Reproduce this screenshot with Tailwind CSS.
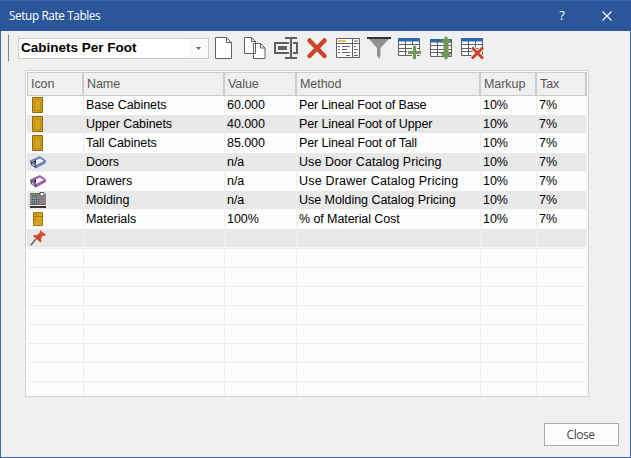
<!DOCTYPE html>
<html lang="en">
<head>
<meta charset="utf-8">
<title>Setup Rate Tables</title>
<script src="https://cdn.jsdelivr.net/npm/@tailwindcss/browser@4"></script>
</head>
<body class="w-[631px] h-[458px] overflow-hidden">
<svg class="hidden">
  <defs>
    <symbol id="door" viewBox="0 0 16 16"><path d="M2.500 .5h10v15h-10z" fill="#cf9d18" stroke="#9c6410"/><path d="M4.500 13.500V5Q4.500 2.500 7.500 2.500T10.500 5v8.500z" fill="#d2a31c" stroke="#b68212" stroke-width=".7"/></symbol>
    <symbol id="tray" viewBox="0 0 16 16"><path d="M0 6.500L10 2l6 4.500V9L6 14.500 1 11z" fill="currentColor"/><path d="M3.500 7.500L10 4.500l3.500 2.500L6.500 10.800z" fill="#fff"/><path d="M3.500 7.500L6 6.300v3.700z" fill="#15151f"/><path d="M.3 7l5.500 4.500V14L1.300 11z" fill="#3b3b58"/><path d="M1.800 9.300l2.700 2v1.200l-2.500-1.800z" fill="#f0f0f8"/></symbol>
    <symbol id="machine" viewBox="0 0 16 16"><path d="M0 2h16v10H0z" fill="#85878a"/><path d="M0 1.500h10M0 12.500h16" stroke="#666"/><path d="M2 3h5v2H2z" fill="#5a8746"/><path d="M10 .5h4v3.500h-4z" fill="#fff" stroke="#555"/><path d="M2 7.500h7M2 9.500h7M2 11.500h5" stroke="#234a83" stroke-dasharray="1 1"/><path d="M11 7.500h4M9 9.500h6M9 11.500h2" stroke="#c9543c" stroke-dasharray="1 1"/><path d="M0 14h16v2H0z" fill="#353535"/></symbol>
    <symbol id="cabinet" viewBox="0 0 16 16"><path d="M3.500 1.500h9v13h-9z" fill="#d7a61a" stroke="#a4721a"/><path d="M3 5.500h10M5 3.500h3M5.500 7v3" stroke="#9a6915" stroke-width=".8"/></symbol>
    <symbol id="pin" viewBox="0 0 16 16"><path d="M6 9L.7 15.300" stroke="#666" stroke-width="1.500"/><path d="M10 0l6 5-1 1-2-.5-2 3 .5 3-1 1L3 6l1-1 3 .3 3-3z" fill="#d24a2e"/></symbol>
    <symbol id="grid" viewBox="0 0 24 24"><path d="M1.500 4h21v15.500h-21z" fill="#fff" stroke="#606060"/><path d="M2 8.500h20M2 12.500h20M2 15.500h20M8.500 5v14M15.500 5v14" stroke="#606060" fill="none"/><path d="M1 2h22v3.500H1z" fill="#2f67ac"/></symbol>
  </defs>
</svg>
<div class="w-[631px] h-[458px] flex flex-col bg-[#f0f0f0] border border-t-0 border-[#3c66a8]">
  <header class="h-[31px] shrink-0 -mx-px px-[9px] flex items-center bg-[#2b579a] border-t border-[#3c66a8] text-white font-['Open_Sans',sans-serif]">
    <h1 class="text-[11.8px] tracking-[-0.4px] grow">Setup Rate Tables</h1>
    <span class="w-[12px] mr-[34px] text-[13px] text-center">?</span>
    <svg class="w-[10px] h-[10px] mr-[10px]" viewBox="0 0 10 10"><path d="M.5.5l9 9M9.500.5l-9 9" stroke="#fff" stroke-width="1.100"/></svg>
  </header>
  <div class="h-[39px] shrink-0 pt-[4px] pl-[7px] flex items-start">
    <div class="w-px h-[26px] bg-[#858585] mr-[9px]"></div>
    <div class="mt-[3px] w-[191px] h-[21px] bg-white border border-[#ccc] flex items-center font-['Liberation_Sans',sans-serif]">
      <span class="pl-[2px] grow text-[13.5px] font-bold whitespace-nowrap">Cabinets Per Foot</span>
      <span class="w-[19px] h-full bg-[#fafafa] flex items-center justify-center"><svg class="w-[5px] h-[3px]" viewBox="0 0 5 3"><path d="M0 0h5L2.500 3z" fill="#666"/></svg></span>
    </div>
    <svg class="ml-[5px] w-[20px] h-[24px] mt-[1px]" viewBox="0 0 20 24" fill="#fff" stroke="#606060"><path d="M1.500 1.500h11l5 5v16h-16zM12.500 1.500v5h5"/></svg>
    <svg class="ml-[9px] w-[24px] h-[24px] mt-[1px]" viewBox="0 0 24 24" fill="#fff" stroke="#606060"><path d="M1.500 1.500h7l4 4v12h-11zM8.500 1.500v4h4M10.500 7.500h7l4.500 4.500v10.500H10.500zM17.500 7.500v4.500h4.500"/></svg>
    <svg class="ml-[6px] w-[26px] h-[24px] mt-[1px]" viewBox="0 0 26 24" fill="none" stroke="#606060" stroke-width="2"><path d="M16 7H2v10h14M20 7h4v10h-4M12 2h12M12 22h12M18 2v20"/><path d="M5 10h9v4H5z" fill="#606060" stroke="none"/></svg>
    <svg class="ml-[7px] w-[22px] h-[24px] mt-[1px]" viewBox="0 0 22 24"><path d="M3.500 4.500l15 15.500M18.500 4.500l-15 15.500" stroke="#cb4528" stroke-width="4.500" stroke-linecap="round"/></svg>
    <svg class="ml-[7px] w-[26px] h-[24px] mt-[1px]" viewBox="0 0 26 24"><path d="M1.500 2.500h23v19h-23z" fill="#fff" stroke="#606060"/><path d="M3 4h8v2H3z" fill="#f3bc58"/><path d="M17.500 3v18M2 7.500h22M3 10.500h2M7 10.500h8M3 13.500h2M7 13.500h5M3 16.500h2M7 16.500h8M19 5h4M19 10.500h2M19 13.500h4M19 16.500h2M11 19.500h4M19 19.500h4" stroke="#606060"/></svg>
    <svg class="ml-[6px] w-[24px] h-[24px] mt-[1px]" viewBox="0 0 24 24"><path d="M2 3h20l-8.500 9v7L12 23l-2-4v-7z" fill="#8f9094"/><path d="M0 1h24v2H0z" fill="#303038"/></svg>
    <svg class="ml-[6px] w-[24px] h-[24px] mt-[1px]" viewBox="0 0 24 24"><use href="#grid"/><path d="M17.500 9v15M10 16.500h14" stroke="#f0f0f0" stroke-width="5"/><path d="M17.500 10v13M11 16.500h13" stroke="#72985a" stroke-width="3"/></svg>
    <svg class="ml-[8px] w-[24px] h-[24px] mt-[1px]" viewBox="0 0 24 24"><use href="#grid" y="1"/><path d="M17 .5l5 6h-3v11h3l-5 6-5-6h3v-11h-3z" fill="#72985a" stroke="#72985a"/></svg>
    <svg class="ml-[7px] w-[24px] h-[24px] mt-[1px]" viewBox="0 0 24 24"><use href="#grid"/><path d="M12 11.500l11 11M23 11.500l-11 11" stroke="#f0f0f0" stroke-width="5"/><path d="M12 11.500l11 11M23 11.500l-11 11" stroke="#cb4528" stroke-width="3"/></svg>
  </div>
  <main class="ml-[24px] w-[564px] h-[327px] shrink-0 border border-[#d2d2d2] bg-[#fdfdfd] p-px font-['Liberation_Sans',sans-serif] text-[12.5px] tracking-[-0.06px] text-black overflow-hidden">
    <div id="head" class="h-[24px] w-[560px] grid grid-cols-[56px_141px_72px_184px_56px_50px] bg-[#f0f0f0] border border-r-0 border-[#ccc] text-[#555]"></div>
    <div id="rows" class="h-[299px] overflow-hidden"></div>
  </main>
  <button class="ml-[543px] mt-[26px] w-[75px] h-[23px] shrink-0 bg-[#fdfdfd] border border-[#adadad] text-[12px] tracking-[-0.5px] text-[#444] font-['Open_Sans',sans-serif] flex items-center justify-center pr-[2px]">Close</button>
</div>
<script>
const icon = (id, c) => `<svg class="w-[16px] h-[16px] ml-[3px] ${c}"><use href="#${id}"/></svg>`;
const data = [
  [icon('door',''),'Base Cabinets','60.000','Per Lineal Foot of Base','10%','7%','tracking-[-0.14px]'],
  [icon('door',''),'Upper Cabinets','40.000','Per Lineal Foot of Upper','10%','7%','tracking-[-0.12px]'],
  [icon('door',''),'Tall Cabinets','85.000','Per Lineal Foot of Tall','10%','7%','tracking-[-0.12px]'],
  [icon('tray','text-[#7183ba]'),'Doors','n/a','Use Door Catalog Pricing','10%','7%','tracking-[0.06px]'],
  [icon('tray','text-[#9a62ae]'),'Drawers','n/a','Use Drawer Catalog Pricing','10%','7%','tracking-[0.2px]'],
  [icon('machine',''),'Molding','n/a','Use Molding Catalog Pricing','10%','7%','tracking-[-0.04px]'],
  [icon('cabinet',''),'Materials','100%','% of Material Cost','10%','7%','tracking-[-0.08px]'],
  [icon('pin',''),'','','','','','']
];
document.getElementById('head').innerHTML = ['Icon','Name','Value','Method','Markup','Tax'].map(t =>
  `<div class="border-r-2 border-[#ccc] flex items-center whitespace-nowrap pl-[3px]">${t}</div>`).join('');
let html = '';
for (let r = 0; r < 16; r++) {
  const row = data[r] || ['','','','','','',''];
  const look = r >= 8 ? 'border-t border-[#eee]' : r % 2 ? 'bg-[#e8e8e8] border-b border-[#f8f8f8]' : 'border-b border-[#fdfdfd]';
  html += `<div class="h-[19px] w-[560px] grid grid-cols-[57px_141px_72px_184px_56px_50px] ${look}">` + row.slice(0, 6).map((c, i) =>
    `<div class="border-r border-[#eee] flex items-center whitespace-nowrap ${i ? 'pl-[2px]' : ''} ${i === 3 ? row[6] : ''}">${c}</div>`).join('') + '</div>';
}
document.getElementById('rows').innerHTML = html;
</script>
</body>
</html>
